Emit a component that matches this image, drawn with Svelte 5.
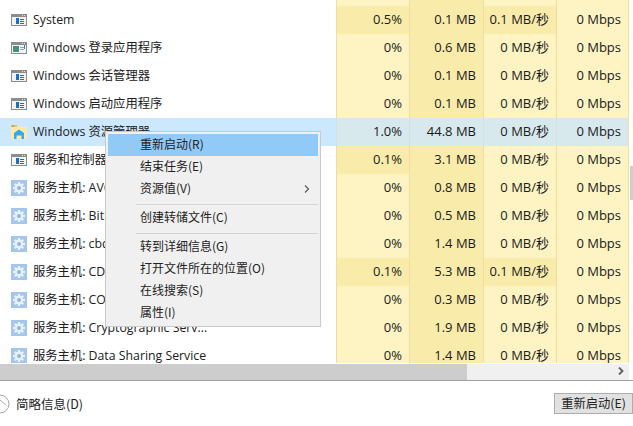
<script>
	const rows = [
		{ name: 'System', icon: 'app', cpu: '0.5%', mem: '0.1 MB', disk: '0.1 MB/秒', net: '0 Mbps', cpuHot: true, diskHot: true },
		{ name: 'Windows 登录应用程序', icon: 'logon', cpu: '0%', mem: '0.6 MB', disk: '0 MB/秒', net: '0 Mbps' },
		{ name: 'Windows 会话管理器', icon: 'app', cpu: '0%', mem: '0.1 MB', disk: '0 MB/秒', net: '0 Mbps' },
		{ name: 'Windows 启动应用程序', icon: 'app', cpu: '0%', mem: '0.1 MB', disk: '0 MB/秒', net: '0 Mbps' },
		{ name: 'Windows 资源管理器', icon: 'folder', cpu: '1.0%', mem: '44.8 MB', disk: '0 MB/秒', net: '0 Mbps', selected: true },
		{ name: '服务和控制器应用', icon: 'app', cpu: '0.1%', mem: '3.1 MB', disk: '0 MB/秒', net: '0 Mbps', cpuHot: true },
		{ name: '服务主机: AVCTP 服务', icon: 'gear', cpu: '0%', mem: '0.8 MB', disk: '0 MB/秒', net: '0 Mbps' },
		{ name: '服务主机: BitLocker Drive', icon: 'gear', cpu: '0%', mem: '0.5 MB', disk: '0 MB/秒', net: '0 Mbps' },
		{ name: '服务主机: cbdhsvc', icon: 'gear', cpu: '0%', mem: '1.4 MB', disk: '0 MB/秒', net: '0 Mbps' },
		{ name: '服务主机: CDPSvc', icon: 'gear', cpu: '0.1%', mem: '5.3 MB', disk: '0.1 MB/秒', net: '0 Mbps', cpuHot: true, diskHot: true },
		{ name: '服务主机: COM+ Event', icon: 'gear', cpu: '0%', mem: '0.3 MB', disk: '0 MB/秒', net: '0 Mbps' },
		{ name: '服务主机: Cryptographic Serv...', icon: 'gear', cpu: '0%', mem: '1.9 MB', disk: '0 MB/秒', net: '0 Mbps' },
		{ name: '服务主机: Data Sharing Service', icon: 'gear', cpu: '0%', mem: '1.4 MB', disk: '0 MB/秒', net: '0 Mbps' }
	];

	const menu = [
		{ label: '重新启动(R)', active: true },
		{ label: '结束任务(E)' },
		{ label: '资源值(V)', arrow: true },
		{ sep: true },
		{ label: '创建转储文件(C)' },
		{ sep: true },
		{ label: '转到详细信息(G)' },
		{ label: '打开文件所在的位置(O)' },
		{ label: '在线搜索(S)' },
		{ label: '属性(I)' }
	];

	const teeth = [0, 45, 90, 135, 180, 225, 270, 315];
</script>

{#snippet icon(kind)}
	{#if kind === 'gear'}
		<svg width="16" height="16" viewBox="0 0 16 16">
			<rect width="16" height="16" fill="#a3c6ec" />
			{#each teeth as t}
				<rect x="6.8" y="2" width="2.4" height="3" fill="#e8f1fa" transform="rotate({t} 8 8)" />
			{/each}
			<circle cx="8" cy="8" r="4.200" fill="#e8f1fa" />
			<circle cx="8" cy="8" r="2" fill="#8fb7e2" />
		</svg>
	{:else if kind === 'folder'}
		<svg width="16" height="14" viewBox="0 0 16 14">
			<path d="M0 0h6l1.500 2H16v12H0z" fill="#fee9a6" />
			<rect width="6" height="2" fill="#eec14e" />
			<rect x="1" y=".5" width="2" height="1" fill="#3aa0e8" />
			<path d="M3 8 8 4.500 13 8v6H10.500v-3.500h-5V14H3z" fill="#35a8f0" />
		</svg>
	{:else}
		<svg width="16" height="12" viewBox="0 0 16 12">
			<rect width="16" height="12" fill="#8c8c8c" />
			<rect x="1" y="3" width="14" height="8" fill="#f1f4f7" />
			<rect x="11" y="1" width="1" height="1" fill="#e8e8e8" />
			<rect x="13" y="1" width="1" height="1" fill="#e8e8e8" />
			{#if kind === 'logon'}
				<rect x="2" y="4" width="6" height="6" fill="#4a8f78" />
				<rect x="9" y="5" width="4" height="1" fill="#9aa4ad" />
				<rect x="9" y="7" width="4" height="1" fill="#9aa4ad" />
				<rect x="13" y="3" width="1" height="4" fill="#2a7fc9" />
			{:else}
				<rect x="5" y="4" width="3" height="6" fill="#1273cc" />
				<rect x="9" y="5" width="4" height="1" fill="#1273cc" />
				<rect x="9" y="7" width="4" height="1" fill="#1273cc" />
				<rect x="9" y="9" width="4" height="1" fill="#1273cc" />
			{/if}
		</svg>
	{/if}
{/snippet}

<div class="window">
	<div class="table">
		<div class="row top">
			<div class="name"></div>
			<div class="cell"></div>
			<div class="cell mem"></div>
			<div class="cell"></div>
			<div class="cell"></div>
		</div>
		{#each rows as row}
			<div class="row" class:selected={row.selected}>
				<div class="name">
					<span class="icon">{@render icon(row.icon)}</span>
					<span class="label">{row.name}</span>
				</div>
				<div class="cell" class:hot={row.cpuHot}>{row.cpu}</div>
				<div class="cell mem">{row.mem}</div>
				<div class="cell" class:hot={row.diskHot}>{row.disk}</div>
				<div class="cell">{row.net}</div>
			</div>
		{/each}

		<div class="vthumb"></div>

		<div class="menu">
			{#each menu as item}
				{#if item.sep}
					<div class="sep"></div>
				{:else}
					<div class="item" class:active={item.active}>
						{item.label}
						{#if item.arrow}
							<svg class="arrow" width="6" height="8" viewBox="0 0 6 8">
								<path d="M1 .5 4.500 4 1 7.500" fill="none" stroke="#555" stroke-width="1.100" />
							</svg>
						{/if}
					</div>
				{/if}
			{/each}
		</div>
	</div>

	<div class="hscroll">
		<div class="hthumb"></div>
		<svg class="hnext" width="6" height="8" viewBox="0 0 6 8">
			<path d="M1 .5 4.500 4 1 7.500" fill="none" stroke="#606060" stroke-width="1.800" />
		</svg>
	</div>

	<div class="footer">
		<div class="less">
			<svg width="10" height="20" viewBox="0 0 10 20">
				<circle cx="0" cy="10" r="9" fill="none" stroke="#a6a6a6" />
				<path d="M0 6 6 11" fill="none" stroke="#a6a6a6" />
			</svg>
			<span>简略信息(D)</span>
		</div>
		<button>重新启动(E)</button>
	</div>
</div>

<style>
	:global(body) {
		margin: 0;
		background: #fff;
		font-family: 'Noto Sans CJK SC', 'Open Sans', sans-serif;
		color: #1a1a1a;
	}

	.window {
		width: 633px;
		height: 426px;
		overflow: hidden;
		display: flex;
		flex-direction: column;
	}

	.table {
		position: relative;
		height: 363px;
		overflow: hidden;
		flex: none;
	}

	.row {
		display: grid;
		grid-template-columns: 336px 73px 74px 73px 73px;
		width: 629px;
		height: 28px;
		font-size: 13px;
		font-family: 'Open Sans', 'Noto Sans CJK SC', sans-serif;
	}

	.row.top {
		height: 6px;
	}

	.name {
		display: flex;
		align-items: center;
		gap: 6px;
		padding-left: 11px;
		padding-bottom: 1px;
		color: #202020;
		font-size: 12.3px;
		white-space: nowrap;
	}

	.label {
		line-height: 16px;
	}

	.icon {
		width: 16px;
		display: flex;
		justify-content: center;
	}

	.icon svg {
		display: block;
	}

	.cell {
		background: #fdf3c3;
		border-left: 1px solid #efdca0;
		text-align: right;
		padding-right: 7px;
		line-height: 27px;
		white-space: nowrap;
	}

	.cell.mem {
		background: #f9ecab;
	}

	.cell.hot {
		background: #f9ecab;
	}

	.cell:last-child {
		border-right: 1px solid #efdca0;
	}

	.row.selected {
		background: #cce8ff;
	}

	.row.selected .cell {
		background: #d8e9ee;
		border-left-color: #d0e2e6;
	}

	.vthumb {
		position: absolute;
		left: 630px;
		top: 166px;
		width: 3px;
		height: 34px;
		background: #cdcdcd;
	}

	.menu {
		position: absolute;
		left: 105px;
		top: 131px;
		width: 216px;
		box-sizing: border-box;
		background: #f0f0f0;
		border: 1px solid #c9c9c9;
		padding: 2px;
		font-size: 12px;
		color: #222;
	}

	.item {
		position: relative;
		height: 22px;
		line-height: 19px;
		padding-left: 32px;
		white-space: nowrap;
	}

	.item.active {
		background: #91c9f7;
	}

	.arrow {
		position: absolute;
		right: 8px;
		top: 7px;
	}

	.sep {
		height: 1px;
		margin: 4px 0 2px 28px;
		background: #d4d4d4;
	}

	.hscroll {
		position: relative;
		flex: none;
		width: 629px;
		height: 16px;
		margin-top: 1px;
		background: #f0f0f0;
	}

	.hthumb {
		width: 467px;
		height: 16px;
		background: #cdcdcd;
	}

	.hnext {
		position: absolute;
		right: 5px;
		top: 3px;
	}

	.footer {
		flex: 1;
		border-top: 1px solid #a0a0a0;
		display: flex;
		align-items: center;
		justify-content: space-between;
		background: #fff;
	}

	.less {
		display: flex;
		align-items: center;
		gap: 6px;
		font-size: 12.500px;
		color: #222;
	}

	.less svg {
		display: block;
	}

	button {
		width: 79px;
		height: 21px;
		padding: 0;
		background: #e1e1e1;
		border: 1px solid #adadad;
		font-family: inherit;
		font-size: 12.300px;
		line-height: 19px;
		color: #222;
	}
</style>
